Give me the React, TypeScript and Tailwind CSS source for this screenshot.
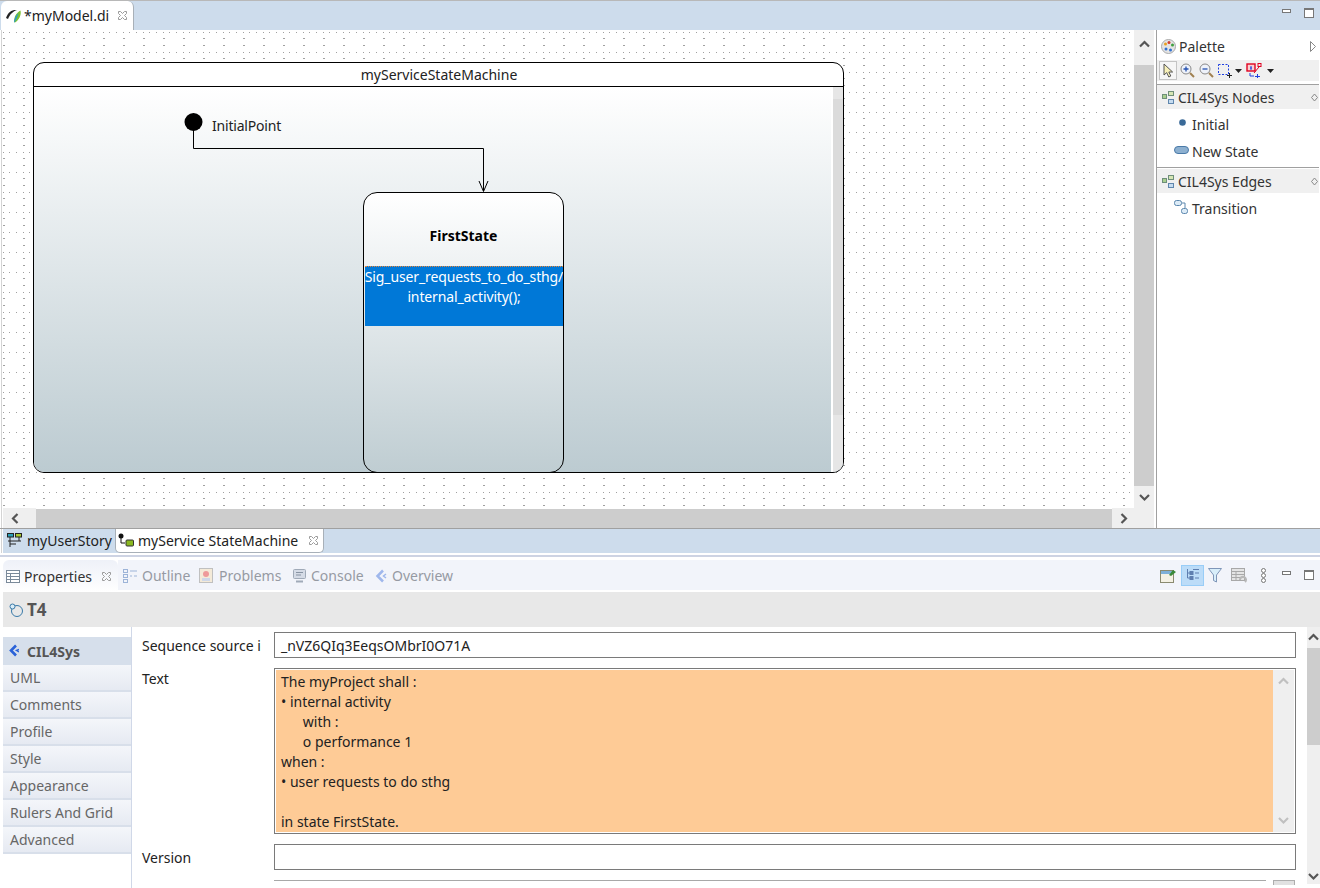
import type { ReactNode } from "react"

const closeIcon = (
  <svg width="11" height="11" viewBox="0 0 11 11" fill="none" stroke="#9a9a9a">
    <path d="M1.5 1.5h2l2 2 2-2h2v2l-2 2 2 2v2h-2l-2-2-2 2h-2v-2l2-2-2-2z" />
  </svg>
)

function Chevron({ dir, color = "#555" }: { dir: "up" | "down" | "left" | "right"; color?: string }) {
  const d = {
    up: "M1 7.5 L5.5 3 L10 7.5",
    down: "M1 3 L5.5 7.5 L10 3",
    left: "M7.5 1 L3 5.5 L7.5 10",
    right: "M3.5 1 L8 5.5 L3.5 10",
  }[dir]
  return (
    <svg width="11" height="11" viewBox="0 0 11 11" fill="none" stroke={color} strokeWidth="2.2">
      <path d={d} />
    </svg>
  )
}

function MinMax() {
  return (
    <div className="flex items-start gap-[13px]">
      <div className="mt-[1px] h-[4px] w-[9px] border border-[#777] bg-white" />
      <div className="h-[10px] w-[10px] border border-[#777] border-t-2 bg-white" />
    </div>
  )
}

function PaletteHeader({ title }: { title: string }) {
  return (
    <div className="flex h-[24px] items-center bg-[#f0f0f0] pl-[5px]">
      <svg width="12" height="13" viewBox="0 0 12 13" fill="none">
        <rect x="0.5" y="3.5" width="4" height="4" fill="#a8cf8e" stroke="#6f8f7a" />
        <rect x="6.5" y="0.5" width="5" height="4" fill="#d6e6b4" stroke="#6f8f7a" />
        <rect x="6.5" y="8.5" width="5" height="4" fill="#c6dcf0" stroke="#5f86ad" />
      </svg>
      <span className="ml-[4px] text-[14px] text-[#333]">{title}</span>
      <svg className="ml-auto mr-[1px]" width="7" height="9" viewBox="0 0 7 9" fill="none" stroke="#888">
        <path d="M3.5 1 L6.5 4.5 L3.5 8 L0.5 4.5 Z" />
      </svg>
    </div>
  )
}

function PaletteItem({ icon, label }: { icon: ReactNode; label: string }) {
  return (
    <div className="flex h-[27px] items-center text-[14px] text-[#333]">
      <div className="flex w-[35px] justify-end pr-[1px]">{icon}</div>
      <span>{label}</span>
    </div>
  )
}

function ToolTab({ icon, label, w }: { icon: ReactNode; label: string; w: string }) {
  return (
    <div className={`flex items-center gap-[5px] pt-[1px] text-[14px] text-[#969aa3] ${w}`}>
      {icon}
      <span>{label}</span>
    </div>
  )
}

const sections = ["UML", "Comments", "Profile", "Style", "Appearance", "Rulers And Grid", "Advanced"]

function DiagramCanvas() {
  return (
    <div className="relative h-[478px] w-[1131px] overflow-hidden bg-white">
      <svg className="absolute inset-0" width="1131" height="478">
        <defs>
          <pattern id="grid" x="0" y="2" width="20" height="20" patternUnits="userSpaceOnUse">
            <rect x="0" y="0" width="1" height="1" fill="#a0a0a0" />
            <rect x="6" y="0" width="1" height="1" fill="#a0a0a0" />
            <rect x="13" y="0" width="1" height="1" fill="#a0a0a0" />
            <rect x="0" y="6" width="2" height="1" fill="#a0a0a0" />
            <rect x="0" y="13" width="2" height="1" fill="#a0a0a0" />
          </pattern>
        </defs>
        <rect width="1131" height="478" fill="url(#grid)" />
      </svg>

      {/* state machine frame */}
      <div className="absolute left-[30px] top-[32px] h-[411px] w-[811px] overflow-hidden rounded-[11px] border border-black bg-white">
        <div className="flex h-[24px] items-center justify-center border-b border-black pl-[1px] text-[14px] text-[#222]">
          myServiceStateMachine
        </div>
        <div className="relative h-[385px] bg-linear-to-b from-white to-[#bccbd1]">
          <div className="absolute bottom-0 right-0 top-0 flex w-[12px] flex-col border-l-2 border-white bg-[#e6e6e6]">
            <div className="mt-[12px] h-[316px] bg-[#dbdbdb]" />
          </div>
        </div>
      </div>

      {/* initial point and its transition */}
      <svg className="absolute inset-0" width="1131" height="478" fill="none">
        <circle cx="190.5" cy="92" r="9" fill="#000" />
        <path d="M190.5 100 V118.5 H480.5 V161" stroke="#000" />
        <path d="M476 151 L480.5 161.5 L485 151" stroke="#000" />
      </svg>
      <div className="absolute left-[209px] top-[85px] text-[14px] tracking-[-0.2px] text-[#222]">InitialPoint</div>

      {/* state */}
      <div className="absolute left-[360px] top-[162px] flex h-[281px] w-[201px] flex-col overflow-hidden rounded-[14px] border border-black bg-linear-to-b from-white to-[#bfcdd2]">
        <div className="flex h-[73px] items-center justify-center pt-[11px] text-[14px] font-bold text-black">
          FirstState
        </div>
        <div className="ml-[1px] flex h-[60px] flex-col items-center border-t border-dotted border-[#e8863a] bg-[#0078d7] text-[14px] leading-[20px] tracking-[-0.12px] whitespace-nowrap text-white">
          <span>Sig_user_requests_to_do_sthg/</span>
          <span>internal_activity();</span>
        </div>
      </div>
    </div>
  )
}

function Palette() {
  return (
    <div className="flex w-[163px] flex-col border-l border-[#a0a0a0]">
      <div className="flex h-[30px] items-center pl-[4px] pt-[3px]">
        <svg width="15" height="15" viewBox="0 0 15 15">
          <circle cx="7.5" cy="7.5" r="7" fill="#e4e4e4" stroke="#aaa" />
          <circle cx="4.5" cy="5" r="1.5" fill="#e8a020" />
          <circle cx="8" cy="3.5" r="1.5" fill="#d04030" />
          <circle cx="11.5" cy="6" r="1.5" fill="#40a040" />
          <circle cx="5" cy="10" r="1.5" fill="#3070d0" />
          <circle cx="9.5" cy="11" r="1.5" fill="#3070d0" />
        </svg>
        <span className="ml-[3px] text-[14px] text-[#333]">Palette</span>
        <svg className="ml-auto mr-[3px]" width="6" height="11" viewBox="0 0 6 11" fill="#fff" stroke="#888">
          <path d="M0.5 0.5 L5.5 5.5 L0.5 10.5 Z" />
        </svg>
      </div>
      <div className="flex h-[21px] items-center bg-[#f0f0f0] pl-[2px]">
        <div className="flex h-[19px] w-[18px] items-center justify-center border border-[#c4c4c4] bg-[#f6f6f6]">
          <svg width="11" height="15" viewBox="0 0 11 15" fill="#f7f0b8" stroke="#555">
            <path d="M1 1 V12 L3.7 9.6 L5.8 14 L7.8 13 L5.8 9 L9.6 9 Z" />
          </svg>
        </div>
        <svg className="ml-[3px]" width="15" height="15" viewBox="0 0 15 15" fill="none">
          <circle cx="6" cy="6" r="5" fill="#eef2fa" stroke="#8a8a8a" />
          <path d="M3.5 6h5M6 3.5v5" stroke="#2450b0" strokeWidth="1.3" />
          <path d="M10 10l4 4" stroke="#a08050" strokeWidth="2" />
        </svg>
        <svg className="ml-[4px]" width="15" height="15" viewBox="0 0 15 15" fill="none">
          <circle cx="6" cy="6" r="5" fill="#eef2fa" stroke="#8a8a8a" />
          <path d="M3.5 6h5" stroke="#2450b0" strokeWidth="1.3" />
          <path d="M10 10l4 4" stroke="#a08050" strokeWidth="2" />
        </svg>
        <svg className="ml-[4px]" width="15" height="15" viewBox="0 0 15 15" fill="none">
          <rect x="0.5" y="1.5" width="10" height="10" stroke="#2040e0" strokeDasharray="2 1.5" />
          <path d="M9 12.5h5M11.5 10v5" stroke="#222" />
        </svg>
        <svg className="ml-[2px]" width="7" height="4" viewBox="0 0 7 4" fill="#222">
          <path d="M0 0h7L3.5 4z" />
        </svg>
        <svg className="ml-[4px]" width="16" height="15" viewBox="0 0 16 15" fill="none">
          <rect x="1" y="1" width="8" height="7" stroke="#e00020" strokeWidth="1.4" fill="#f8d0d0" />
          <rect x="12" y="0.5" width="3" height="3" stroke="#e00020" />
          <path d="M4 5h2M5 3v4" stroke="#2040e0" />
          <path d="M8 10l5-6" stroke="#e00020" />
          <path d="M4 10v3h4M9 13.500h5M11.500 11v4" stroke="#2040e0" />
        </svg>
        <svg className="ml-[5px]" width="7" height="4" viewBox="0 0 7 4" fill="#222">
          <path d="M0 0h7L3.5 4z" />
        </svg>
      </div>
      <div className="mt-[3px] border-t border-[#a0a0a0]" />
      <PaletteHeader title="CIL4Sys Nodes" />
      <div className="pt-[2px]">
        <PaletteItem
          icon={
            <svg className="mb-[4px] mr-[5px]" width="7" height="7" viewBox="0 0 7 7">
              <circle cx="3.500" cy="3.500" r="3.300" fill="#3a6a98" />
            </svg>
          }
          label="Initial"
        />
        <PaletteItem
          icon={
            <svg className="mb-[4px] mr-[2px]" width="15" height="8" viewBox="0 0 15 8">
              <rect x="0.500" y="0.500" width="14" height="7" rx="3.500" fill="#8db0d0" stroke="#4a7aa8" />
            </svg>
          }
          label="New State"
        />
      </div>
      <div className="mt-[2px] border-t border-[#a0a0a0]" />
      <div className="mt-[1px]">
        <PaletteHeader title="CIL4Sys Edges" />
      </div>
      <div className="pt-[2px]">
        <PaletteItem
          icon={
            <svg className="mb-[3px] mr-[3px]" width="14" height="14" viewBox="0 0 14 14" fill="#dcebf7" stroke="#5a86ad">
              <rect x="0.500" y="0.500" width="7" height="5" rx="2" />
              <rect x="7.500" y="8.500" width="6" height="5" rx="2" />
              <path d="M8 3h3v5" fill="none" />
            </svg>
          }
          label="Transition"
        />
      </div>
    </div>
  )
}

function PropertiesBar() {
  return (
    <div className="flex h-[32px] items-start bg-white pl-[3px]">
      <div className="flex h-[32px] w-[115px] items-center gap-[4px] rounded-t-[6px] bg-linear-to-b from-[#eef1f8] to-white pl-[3px] pt-[1px] text-[14px] text-[#333]">
        <svg width="14" height="13" viewBox="0 0 14 13" fill="#fff" stroke="#7a8a9a">
          <rect x="0.500" y="0.500" width="13" height="12" />
          <path d="M0.500 3.500h13M0.500 6.500h13M0.500 9.500h13M4.500 3.500v9" />
        </svg>
        <span>Properties</span>
        <span className="ml-[5px]">{closeIcon}</span>
      </div>
      <div className="flex h-[30px] flex-1 items-center bg-[#f2f4fa] pl-[5px]">
        <ToolTab
          w="w-[76px]"
          label="Outline"
          icon={
            <svg width="14" height="14" viewBox="0 0 14 14" fill="none" stroke="#9db4d8">
              <rect x="0.500" y="0.500" width="4" height="3" />
              <rect x="0.500" y="5.500" width="4" height="3" />
              <rect x="0.500" y="10.500" width="4" height="3" />
              <path d="M7 2h7M7 7h2M11 7h3" />
            </svg>
          }
        />
        <ToolTab
          w="w-[94px]"
          label="Problems"
          icon={
            <svg width="15" height="15" viewBox="0 0 15 15">
              <rect x="0.500" y="0.500" width="13" height="14" fill="#f4ead8" stroke="#c0c0c0" />
              <circle cx="7" cy="6" r="3" fill="#ee9a9a" />
              <rect x="3" y="10" width="8" height="3" fill="#cfd8e8" />
            </svg>
          }
        />
        <ToolTab
          w="w-[82px]"
          label="Console"
          icon={
            <svg width="13" height="14" viewBox="0 0 13 14" fill="#d5dbe6" stroke="#a0aab8">
              <rect x="0.500" y="0.500" width="12" height="9" rx="1" />
              <path d="M3 12.500h7" strokeWidth="2" />
              <path d="M3 3.500h7M3 6h5" stroke="#8893a3" />
            </svg>
          }
        />
        <ToolTab
          w="w-[85px]"
          label="Overview"
          icon={
            <svg width="12" height="14" viewBox="0 0 12 14" fill="none" stroke="#9fb7ec" strokeWidth="2.500">
              <path d="M8 1.500 L2.500 7 L8 12.500" />
              <path d="M11 5 L8.500 7 L11 9" strokeWidth="1.500" />
            </svg>
          }
        />
        <div className="ml-auto flex items-center pr-[6px]">
          <svg width="16" height="15" viewBox="0 0 16 15">
            <rect x="0.500" y="2.500" width="13" height="12" fill="#f4f1e4" stroke="#8a8a70" />
            <rect x="1" y="3" width="12" height="3" fill="#7fb0d8" />
            <path d="M9 7 L13 2 L16 4 L11 8 Z" fill="#3a8a3a" />
          </svg>
          <div className="ml-[5px] flex h-[21px] w-[23px] items-center justify-center border border-[#99cdf7] bg-[#bcdcf8]">
            <svg width="13" height="14" viewBox="0 0 13 14" fill="none" stroke="#5f7fb0">
              <path d="M1.500 1v9H4M1.500 5H4" />
              <rect x="4" y="3.500" width="3" height="3" fill="#5f7fb0" />
              <rect x="4" y="8.500" width="3" height="3" fill="#5f7fb0" />
              <path d="M7 1.500h6M9 5h4M9 10h4" />
            </svg>
          </div>
          <svg className="ml-[4px]" width="14" height="15" viewBox="0 0 14 15" fill="#d8eefa" stroke="#7f96b8">
            <path d="M0.500 0.500h13L8.500 7v7l-3-1.500V7z" />
          </svg>
          <svg className="ml-[9px]" width="16" height="15" viewBox="0 0 16 15" fill="#e4e4e4" stroke="#a8a8a8">
            <rect x="0.500" y="0.500" width="13" height="12" />
            <path d="M0.500 3.500h13M0.500 6.500h13M0.500 9.500h13M5 3.500v9" />
            <path d="M9 12a3 3 0 1 1 5 2" fill="none" stroke="#b8b8b8" strokeWidth="2" />
          </svg>
          <svg className="ml-[14px]" width="5" height="15" viewBox="0 0 5 15" fill="#fff" stroke="#777">
            <circle cx="2.500" cy="2.500" r="2" />
            <circle cx="2.500" cy="7.500" r="2" />
            <circle cx="2.500" cy="12.500" r="2" />
          </svg>
          <div className="ml-[16px]">
            <MinMax />
          </div>
        </div>
      </div>
    </div>
  )
}

function SectionTabs() {
  return (
    <div className="w-[132px] shrink-0 border-r border-[#d0d8e8] pl-[3px] pt-[10px]">
      <div className="flex h-[28px] items-center gap-[8px] bg-[#d6dfeb] pl-[6px] text-[14px] font-bold text-[#555]">
        <svg width="10" height="14" viewBox="0 0 10 14" fill="none" stroke="#2a62d8" strokeWidth="2.600">
          <path d="M7 1.500 L2 6.500 L7 11.500" />
          <path d="M10 5.500 L7.500 6.500 L10 8" strokeWidth="1.400" />
        </svg>
        <span>CIL4Sys</span>
      </div>
      {sections.map((name) => (
        <div
          key={name}
          className="flex h-[27px] items-center border-b-2 border-[#d8dfea] bg-linear-to-b from-[#f4f6fa] to-[#e6eaf2] pl-[7px] text-[14px] text-[#666]"
        >
          {name}
        </div>
      ))}
    </div>
  )
}

const textLines = [
  "The myProject shall :",
  "• internal activity",
  "      with :",
  "      o performance 1",
  "when :",
  "• user requests to do sthg",
  " ",
  "in state FirstState.",
]

function Form() {
  return (
    <div className="flex-1 pl-[10px] pt-[5px] text-[14px]">
      <div className="flex h-[26px] items-center">
        <div className="w-[132px] shrink-0">
          <label className="block w-[119px] overflow-hidden whitespace-nowrap text-[#222]">
            Sequence source id
          </label>
        </div>
        <div className="flex h-[26px] flex-1 items-center border border-[#7a7a7a] pl-[6px] text-[#222]">
          _nVZ6QIq3EeqsOMbrI0O71A
        </div>
      </div>
      <div className="mt-[10px] flex h-[166px]">
        <label className="w-[132px] shrink-0 text-[#222]">Text</label>
        <div className="flex flex-1 border border-[#7a7a7a] p-[1px]">
          <div className="flex-1 bg-[#fecb96] pl-[5px] pt-[2px] leading-[20px] whitespace-pre text-[#222]">
            {textLines.map((line, i) => (
              <div key={i}>{line}</div>
            ))}
          </div>
          <div className="flex w-[21px] flex-col items-center justify-between bg-[#efefef] py-[6px]">
            <Chevron dir="up" color="#c0c0c0" />
            <Chevron dir="down" color="#c0c0c0" />
          </div>
        </div>
      </div>
      <div className="mt-[10px] flex h-[26px] items-center">
        <label className="w-[132px] shrink-0 text-[#222]">Version</label>
        <div className="h-[26px] flex-1 border border-[#7a7a7a]" />
      </div>
      <div className="mt-[10px] flex h-[5px] pl-[132px]">
        <div className="h-[5px] flex-1 border-t border-[#a8a8a8]" />
        <div className="ml-[7px] mr-px h-[5px] w-[22px] border border-b-0 border-[#adadad] bg-[#e1e1e1]" />
      </div>
    </div>
  )
}

export default function App() {
  return (
    <div className="flex h-[888px] w-[1320px] flex-col overflow-hidden bg-white font-['Noto_Sans',sans-serif]">
      {/* editor tabs */}
      <div className="flex h-[30px] items-end border-t border-[#b8b8b8] bg-[#cddcec] pl-px">
        <div className="flex h-[29px] w-[133px] items-center rounded-t-[6px] border-r border-[#a8b0b8] bg-white pl-[4px] text-[14px] text-[#222]">
          <svg width="17" height="14" viewBox="0 0 17 14" fill="none">
            <path d="M1 9 C3 3 7 0.500 12 1 C8 2.500 5 5 3 10 Z" fill="#222" />
            <path d="M9 13 C9 8 11 4 15.500 1.500 C16.500 6 14 11 10 13.500 Z" fill="#7cc230" />
            <path d="M9 13 C9.500 9 11 6 13.500 4 C12.500 7.500 11 11 9.500 13.500 Z" fill="#2a9ad0" />
          </svg>
          <span className="ml-[2px]">*myModel.di</span>
          <span className="ml-[8px]">{closeIcon}</span>
        </div>
        <div className="ml-auto self-start pr-[6px] pt-[7px]">
          <MinMax />
        </div>
      </div>

      {/* diagram and palette */}
      <div className="flex h-[498px]">
        <div className="ml-px flex w-[1155px] flex-col border-l border-[#d4d4d4] pl-px">
          <div className="flex h-[478px]">
            <DiagramCanvas />
            <div className="flex h-[478px] w-[20px] flex-col items-center bg-[#efefef]">
              <div className="flex h-[35px] items-start pt-[9px]">
                <Chevron dir="up" />
              </div>
              <div className="h-[421px] w-[20px] bg-[#cdcdcd]" />
              <div className="flex h-[22px] items-center">
                <Chevron dir="down" />
              </div>
            </div>
            <div className="w-[2px] bg-white" />
          </div>
          <div className="flex h-[20px] items-center">
            <div className="flex h-[20px] w-[33px] items-center bg-[#efefef] pl-[7px]">
              <Chevron dir="left" />
            </div>
            <div className="h-[19px] w-[1076px] bg-[#cdcdcd]" />
            <div className="flex h-[20px] w-[22px] items-center justify-center bg-[#efefef]">
              <Chevron dir="right" />
            </div>
            <div className="h-[20px] w-[20px] bg-[#efefef]" />
          </div>
        </div>
        <Palette />
      </div>

      {/* diagram tabs */}
      <div className="flex h-[25px] items-start border-t border-[#a0a0a0] bg-white pl-px">
        <div className="flex h-[24px] flex-1 border-l border-[#d4d4d4] pl-px">
          <div className="flex h-[24px] flex-1 items-start bg-[#cddcec] text-[14px] text-[#222]">
            <div className="flex h-[24px] w-[112px] items-center gap-[5px] pb-px pl-[4px]">
              <svg width="15" height="15" viewBox="0 0 15 15" fill="none" stroke="#222">
                <rect x="0.500" y="0.500" width="6" height="3.500" fill="#2aa0b8" />
                <rect x="8.500" y="0.500" width="6" height="3.500" fill="#a8c830" />
                <path d="M3 4v10M12 4v4M1 8h13M3 11h6" />
              </svg>
              <span>myUserStory</span>
            </div>
            <div className="flex h-[24px] w-[209px] items-center gap-[4px] rounded-b-[5px] border-x border-b border-[#a8b0b8] bg-white pb-px pl-[2px]">
              <svg width="16" height="14" viewBox="0 0 16 14" fill="none">
                <circle cx="3" cy="3" r="2.500" fill="#111" />
                <path d="M3 5v5h4" stroke="#111" />
                <rect x="8" y="7" width="7.500" height="6" rx="1" fill="#8ab820" stroke="#333" />
              </svg>
              <span>myService StateMachine</span>
              <span className="ml-[6px]">{closeIcon}</span>
            </div>
          </div>
        </div>
      </div>

      {/* gap above the properties view */}
      <div className="mt-[2px] h-[5px] border-t-2 border-[#cdd3e3]" />

      <PropertiesBar />

      <div className="ml-[3px] flex h-[35px] items-center gap-[4px] bg-[#e8e8e8] pl-[6px]">
        <svg width="14" height="14" viewBox="0 0 14 14" fill="none" stroke="#3a7aa8">
          <circle cx="8" cy="8" r="5.500" />
          <circle cx="3.500" cy="3.500" r="2.500" fill="#d8ecf8" />
        </svg>
        <span className="text-[17px] font-bold text-[#555]">T4</span>
      </div>

      <div className="flex min-h-0 flex-1">
        <SectionTabs />
        <Form />
        <div className="mb-[4px] ml-[11px] flex w-[13px] flex-col items-center bg-[#efefef]">
          <div className="flex h-[21px] items-center">
            <Chevron dir="up" />
          </div>
          <div className="h-[97px] w-[13px] bg-[#cdcdcd]" />
          <div className="mt-auto pb-[2px]">
            <Chevron dir="down" />
          </div>
        </div>
      </div>
    </div>
  )
}
